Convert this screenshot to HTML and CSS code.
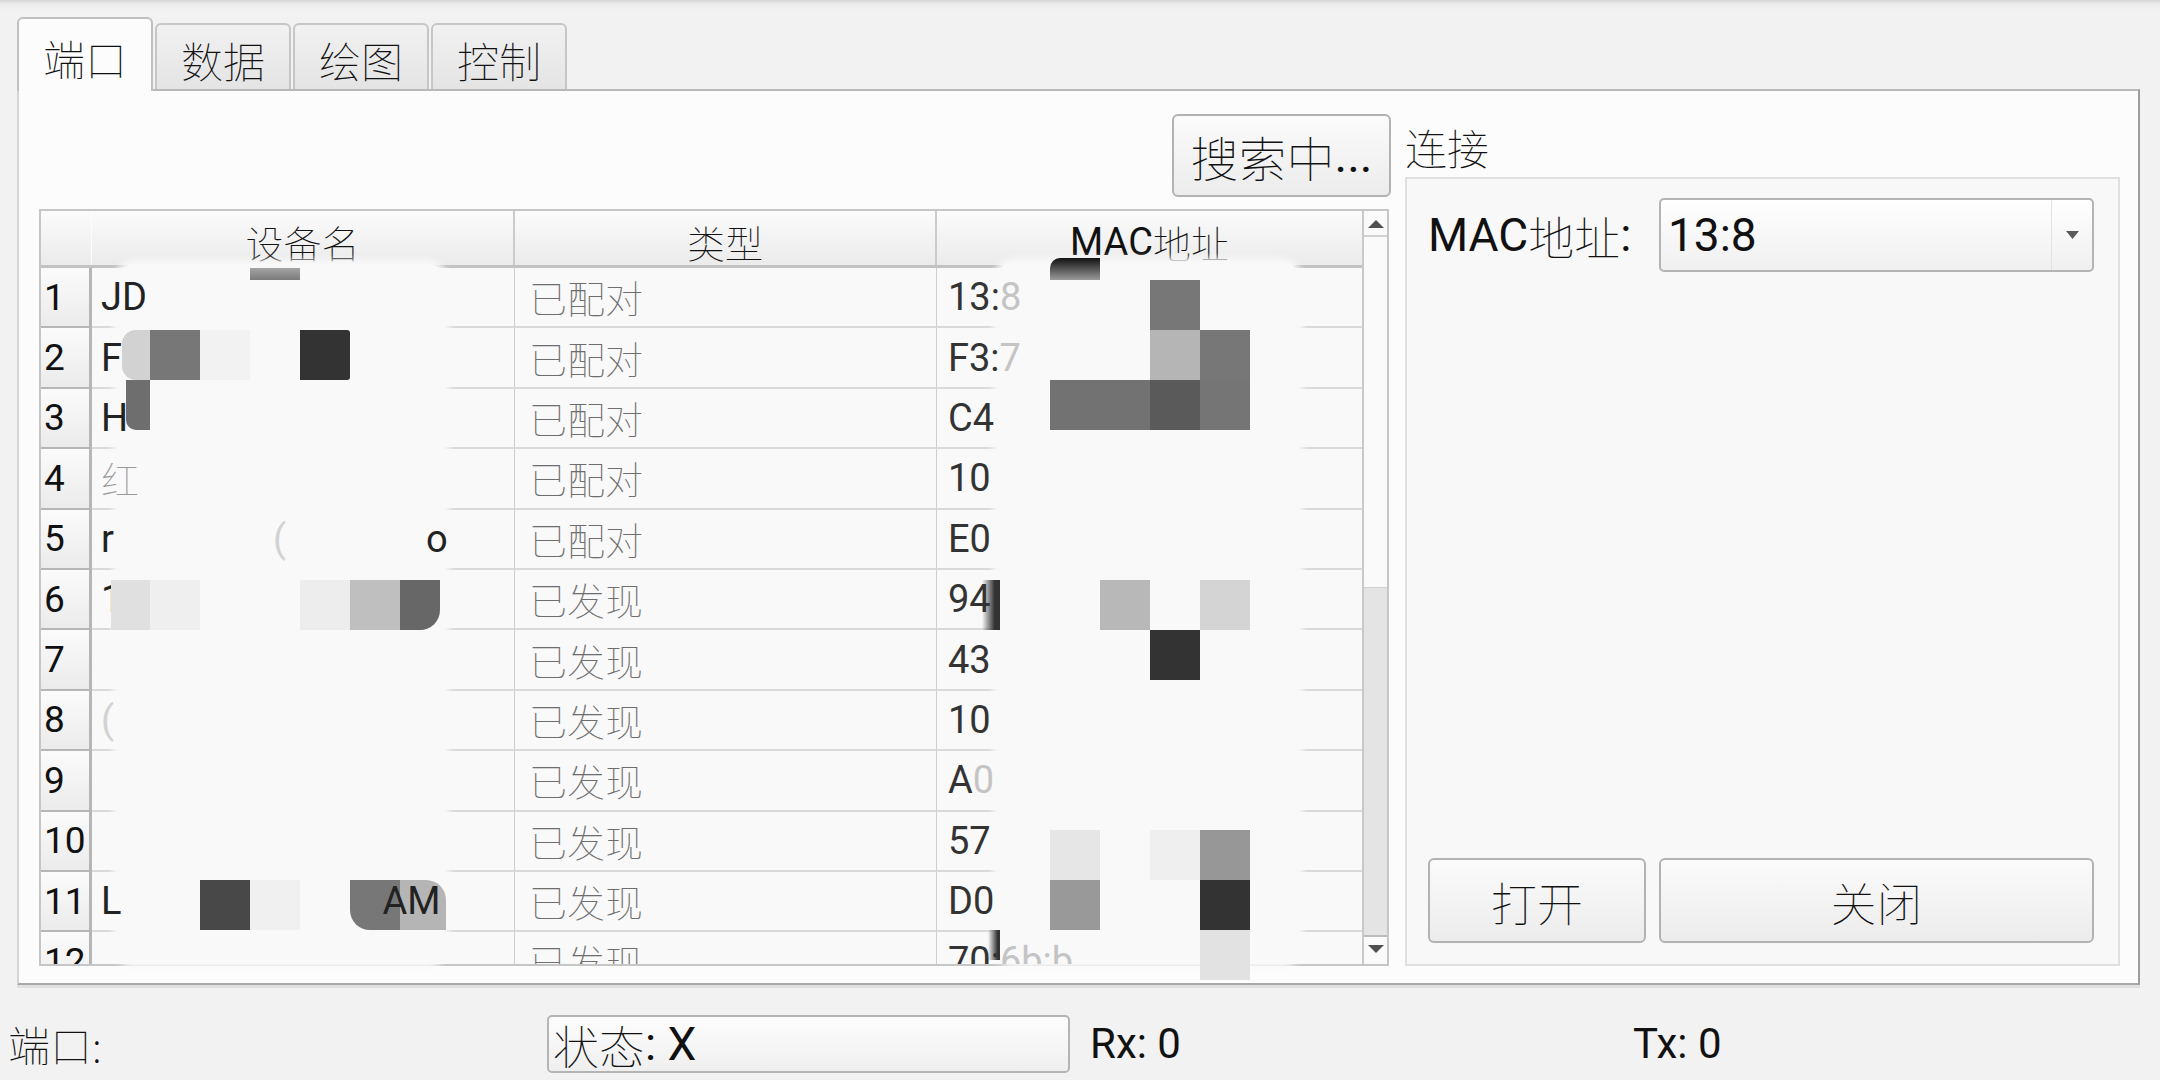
FILE: index.html
```html
<!DOCTYPE html>
<html lang="zh">
<head>
<meta charset="utf-8">
<title>端口</title>
<link rel="stylesheet" href="styles.css">
</head>
<body>
<div class="app">
  <div class="tabbar">
    <div class="tab active"><span class="cj">端口</span></div>
    <div class="tab"><span class="cj">数据</span></div>
    <div class="tab"><span class="cj">绘图</span></div>
    <div class="tab"><span class="cj">控制</span></div>
  </div>

  <div class="pane">
    <div class="left-col">
      <button type="button" class="btn search"><span class="cj">搜索中</span>...</button>
      <div class="table">
        <div class="tmain">
          <div class="thead">
            <div class="th corner"></div>
            <div class="th sep"><span class="cj">设备名</span></div>
            <div class="th sep"><span class="cj">类型</span></div>
            <div class="th">MAC<span class="cj">地址</span></div>
          </div>
          <div class="tbody">
            <div class="tr"><div class="rh">1</div><div class="td name"><span class="t">JD</span></div><div class="td type"><span class="t cj">已配对</span></div><div class="td mac"><span class="t">13:<span class="fade">8</span></span></div></div>
            <div class="tr"><div class="rh">2</div><div class="td name"><span class="t">F</span></div><div class="td type"><span class="t cj">已配对</span></div><div class="td mac"><span class="t">F3:<span class="fade">7</span></span></div></div>
            <div class="tr"><div class="rh">3</div><div class="td name"><span class="t">H</span></div><div class="td type"><span class="t cj">已配对</span></div><div class="td mac"><span class="t">C4</span></div></div>
            <div class="tr"><div class="rh">4</div><div class="td name"><span class="t cj grey">红</span></div><div class="td type"><span class="t cj">已配对</span></div><div class="td mac"><span class="t">10</span></div></div>
            <div class="tr"><div class="rh">5</div><div class="td name"><span class="t">r</span><span class="t faint gap-paren">(</span><span class="t gap-o">o</span></div><div class="td type"><span class="t cj">已配对</span></div><div class="td mac"><span class="t">E0</span></div></div>
            <div class="tr"><div class="rh">6</div><div class="td name"><span class="t">1</span></div><div class="td type"><span class="t cj">已发现</span></div><div class="td mac"><span class="t">94</span></div></div>
            <div class="tr"><div class="rh">7</div><div class="td name"></div><div class="td type"><span class="t cj">已发现</span></div><div class="td mac"><span class="t">43</span></div></div>
            <div class="tr"><div class="rh">8</div><div class="td name"><span class="t faint">(</span></div><div class="td type"><span class="t cj">已发现</span></div><div class="td mac"><span class="t">10</span></div></div>
            <div class="tr"><div class="rh">9</div><div class="td name"></div><div class="td type"><span class="t cj">已发现</span></div><div class="td mac"><span class="t">A<span class="fade">0</span></span></div></div>
            <div class="tr"><div class="rh">10</div><div class="td name"></div><div class="td type"><span class="t cj">已发现</span></div><div class="td mac"><span class="t">57</span></div></div>
            <div class="tr"><div class="rh">11</div><div class="td name"><span class="t">L</span><span class="t top gap-am">AM</span></div><div class="td type"><span class="t cj">已发现</span></div><div class="td mac"><span class="t">D0</span></div></div>
            <div class="tr"><div class="rh">12</div><div class="td name"></div><div class="td type"><span class="t cj">已发现</span></div><div class="td mac"><span class="t">70:<span class="fade">6b:b</span></span></div></div>
          </div>
        </div>
        <div class="vscroll">
          <div class="sb-btn sb-up"><svg width="16" height="8" viewBox="0 0 16 8"><polygon points="0,8 8,0 16,8" fill="#505050"/></svg></div>
          <div class="sb-track"></div>
          <div class="sb-thumb"></div>
          <div class="sb-btn sb-down"><svg width="16" height="8" viewBox="0 0 16 8"><polygon points="0,0 16,0 8,8" fill="#505050"/></svg></div>
        </div>

        <div class="cover cover-name"></div>
        <div class="cover cover-mac"></div>
        <div class="mz b1"></div><div class="mz b2"></div><div class="mz b3"></div><div class="mz b4"></div>
        <div class="mz b5"></div><div class="mz b6"></div><div class="mz b7"></div><div class="mz b8"></div>
        <div class="mz b9"></div><div class="mz b10"></div><div class="mz b11"></div><div class="mz b12"></div>
        <div class="mz b13"></div><div class="mz b14"></div><div class="mz b15"></div>
        <div class="mz c1"></div><div class="mz c2"></div><div class="mz c3"></div><div class="mz c4"></div>
        <div class="mz c5"></div><div class="mz c6"></div><div class="mz c7"></div><div class="mz c8"></div>
        <div class="mz c9"></div><div class="mz c10"></div><div class="mz c11"></div><div class="mz c12"></div>
        <div class="mz c13"></div><div class="mz c14"></div><div class="mz c15"></div><div class="mz c16"></div>
        <div class="mz c17"></div><div class="mz c18"></div>
      </div>
    </div>

    <div class="right-col">
      <div class="group-title"><span class="cj">连接</span></div>
      <div class="group">
        <div class="grow top-row">
          <div class="lbl">MAC<span class="cj">地址</span>:</div>
          <div class="combo">
            <span class="combo-text">13:8</span>
            <span class="combo-btn"><svg width="13" height="8" viewBox="0 0 13 8"><polygon points="0,0 13,0 6.5,8" fill="#5a5a5a"/></svg></span>
          </div>
        </div>
        <div class="grow bottom-row">
          <button type="button" class="btn"><span class="cj">打开</span></button>
          <button type="button" class="btn"><span class="cj">关闭</span></button>
        </div>
      </div>
    </div>
  </div>

  <div class="statusbar">
    <div class="st-lbl"><span class="cj">端口:</span></div>
    <div class="st-box"><span class="cj">状态</span>: X</div>
    <div class="st-num rx">Rx: 0</div>
    <div class="st-num">Tx: 0</div>
  </div>
</div>
</body>
</html>
```

FILE: styles.css
```css
* { box-sizing: border-box; }
html, body { margin: 0; padding: 0; }
body {
  width: 2160px;
  height: 1080px;
  overflow: hidden;
  background: linear-gradient(#d6d6d6 0, #ebebeb 4px, #f2f2f2 10px, #f2f2f2 100%);
  font-family: Roboto, "Noto Sans CJK SC", sans-serif;
  color: #111;
  line-height: 1;
}
.cj {
  font-family: "Noto Sans CJK SC", sans-serif;
  font-weight: 100;
}
.app { display: flex; flex-direction: column; height: 1080px; }

/* tabs */
.tabbar {
  display: flex;
  align-items: flex-end;
  gap: 2px;
  height: 89px;
  padding-left: 17px;
}
.tab {
  width: 136px;
  height: 66px;
  border: 2px solid #c6c6c6;
  border-bottom: none;
  border-radius: 6px 6px 0 0;
  background: linear-gradient(#f1f1f1, #e4e4e4);
  display: flex;
  align-items: center;
  justify-content: center;
  padding-top: 6px;
  font-size: 42px;
  color: #111;
}
.tab.active {
  height: 74px;
  margin-bottom: -2px;
  position: relative;
  z-index: 2;
  background: #fcfcfc;
  border-color: #c0c0c0;
}

/* main pane */
.pane {
  margin-left: 17px;
  width: 2123px;
  height: 896px;
  border: 2px solid;
  border-color: #b8b8b8 #9c9c9c #a8a8a8 #d4d4d4;
  background: #fcfcfc;
  box-shadow: 0 3px 0 #e0e0e0;
  display: flex;
  gap: 14px;
  padding: 23px 18px 17px 20px;
}
.left-col {
  width: 1352px;
  display: flex;
  flex-direction: column;
}
.btn {
  font-family: Roboto, "Noto Sans CJK SC", sans-serif;
  font-size: 46px;
  color: #111;
  line-height: 1;
  margin: 0;
  padding: 0;
  border: 2px solid #b2b2b2;
  border-radius: 6px;
  background: linear-gradient(#fbfbfb, #ececec);
  display: flex;
  align-items: center;
  justify-content: center;
}
.btn.search {
  align-self: flex-end;
  width: 219px;
  height: 83px;
  font-size: 48px;
}

/* table */
.table {
  position: relative;
  width: 1350px;
  height: 757px;
  margin-top: 12px;
  border: 2px solid #c6c6c6;
  background: #f9f9f9;
  display: flex;
}
.tmain {
  width: 1321px;
  display: flex;
  flex-direction: column;
}
.thead {
  display: grid;
  grid-template-columns: 51px 423px 422px 425px;
  height: 57px;
  border-bottom: 3px solid #c2c2c2;
  background: linear-gradient(#fbfbfb, #ebebeb);
}
.th {
  display: flex;
  align-items: center;
  justify-content: center;
  padding-top: 8px;
  font-size: 38px;
  color: #111;
}
.th.corner { border-right: 1px solid #fdfdfd; }
.th.sep { border-right: 2px solid #cbcbcb; }
.tbody {
  flex: 1;
  overflow: hidden;
}
.tr {
  display: grid;
  grid-template-columns: 51px 423px 422px 425px;
  height: 60.4px;
}
.rh {
  background: linear-gradient(#fbfbfb, #ebebeb);
  border-right: 3px solid #b6b6b6;
  border-bottom: 2px solid #b6b6b6;
  display: flex;
  align-items: center;
  padding-left: 3px;
  font-size: 37px;
  color: #111;
}
.td {
  display: flex;
  align-items: center;
  border-bottom: 2px solid #dadada;
  font-size: 38px;
  white-space: nowrap;
}
.td.name { padding-left: 9px; color: #222; border-right: 1px solid #cecece; }
.td.type { padding-left: 14px; color: #6e6e6e; border-right: 1px solid #cecece; }
.td.mac { padding-left: 11px; color: #333; }
.t { position: relative; z-index: 2; }
.t.top { z-index: 4; }
.grey { color: #9a9a9a; }
.faint { color: #d2d2d2; }
.fade { color: #c4c4c4; }
.gap-paren { margin-left: 159px; }
.gap-o { margin-left: 140px; }
.gap-am { margin-left: 261px; }

/* scrollbar */
.vscroll {
  width: 25px;
  border-left: 2px solid #c9c9c9;
  display: flex;
  flex-direction: column;
  background: #fafafa;
}
.sb-btn {
  display: flex;
  align-items: center;
  justify-content: center;
}
.sb-up { height: 26px; border-bottom: 2px solid #d2d2d2; padding-top: 2px; }
.sb-track { height: 350px; }
.sb-thumb {
  height: 350px;
  background: #e4e4e4;
  border-top: 1px solid #d0d0d0;
  border-bottom: 2px solid #bcbcbc;
}
.sb-down { flex: 1; padding-bottom: 4px; }

/* redaction overlay */
.cover {
  position: absolute;
  z-index: 1;
  background: #f9f9f9;
  border-radius: 18px;
  box-shadow: 0 0 6px 4px #f9f9f9;
}
.cover-name { left: 76px; top: 53px; width: 328px; height: 700px; }
.cover-mac { left: 956px; top: 51px; width: 302px; height: 702px; }
.mz { position: absolute; z-index: 3; width: 50px; height: 50px; }
.b1 { left: 209px; top: 57px; height: 12px; background: linear-gradient(#a5a5a5, #7a7a7a); }
.b2 { left: 81px; top: 119px; width: 28px; background: #d2d2d2; border-radius: 14px 0 0 14px; }
.b3 { left: 109px; top: 119px; background: #777777; }
.b4 { left: 159px; top: 119px; background: #f2f2f2; }
.b5 { left: 259px; top: 119px; background: #333333; border-radius: 0 3px 3px 0; }
.b6 { left: 85px; top: 169px; width: 24px; background: #6e6e6e; border-radius: 0 0 0 10px; }
.b7 { left: 70px; top: 369px; width: 39px; background: #e0e0e0; }
.b8 { left: 109px; top: 369px; background: #efefef; }
.b9 { left: 259px; top: 369px; background: #ededed; }
.b10 { left: 309px; top: 369px; background: #bfbfbf; }
.b11 { left: 359px; top: 369px; width: 40px; background: #676767; border-radius: 0 0 20px 0; }
.b12 { left: 159px; top: 669px; background: #484848; }
.b13 { left: 209px; top: 669px; background: #f0f0f0; }
.b14 { left: 309px; top: 669px; background: #777777; border-radius: 0 0 0 20px; }
.b15 { left: 359px; top: 669px; width: 46px; background: #b5b5b5; border-radius: 0 20px 0 0; }
.c1 { left: 1009px; top: 47px; height: 22px; background: linear-gradient(#111111, #9a9a9a); border-radius: 10px 0 0 0; }
.c2 { left: 1109px; top: 69px; background: #777777; }
.c3 { left: 1109px; top: 119px; background: #b5b5b5; }
.c4 { left: 1159px; top: 119px; background: #777777; }
.c5 { left: 1009px; top: 169px; width: 100px; background: #727272; }
.c6 { left: 1109px; top: 169px; background: #5a5a5a; }
.c7 { left: 1159px; top: 169px; background: #757575; }
.c8 { left: 941px; top: 369px; width: 18px; background: linear-gradient(to right, rgba(51,51,51,0), #333333 70%); }
.c9 { left: 1059px; top: 369px; background: #b8b8b8; }
.c10 { left: 1159px; top: 369px; background: #d4d4d4; }
.c11 { left: 1109px; top: 419px; background: #333333; }
.c12 { left: 1009px; top: 619px; background: #e6e6e6; }
.c13 { left: 1109px; top: 619px; background: #efefef; }
.c14 { left: 1159px; top: 619px; background: #979797; }
.c15 { left: 1009px; top: 669px; background: #999999; }
.c16 { left: 1159px; top: 669px; background: #333333; }
.c17 { left: 1159px; top: 719px; background: #e2e2e2; }
.c18 { left: 947px; top: 719px; width: 12px; height: 30px; background: linear-gradient(to right, rgba(51,51,51,0), #333333 80%); }

/* right column */
.right-col {
  width: 715px;
  display: flex;
  flex-direction: column;
}
.group-title {
  height: 63px;
  display: flex;
  align-items: center;
  padding-top: 2px;
  font-size: 42px;
  color: #111;
}
.group {
  flex: 1;
  border: 2px solid #e0e0e0;
  background: #f8f8f8;
  padding: 19px 24px 21px 21px;
  display: flex;
  flex-direction: column;
  justify-content: space-between;
}
.grow {
  display: grid;
  grid-template-columns: 218px 435px;
  column-gap: 13px;
}
.top-row { height: 74px; }
.bottom-row { height: 85px; }
.lbl {
  display: flex;
  align-items: center;
  font-size: 46px;
  color: #111;
  white-space: nowrap;
}
.combo {
  border: 2px solid #b4b4b4;
  border-radius: 5px;
  background: linear-gradient(#ffffff, #f0f0f0);
  display: flex;
}
.combo-text {
  flex: 1;
  display: flex;
  align-items: center;
  padding-left: 7px;
  font-size: 46px;
  color: #111;
}
.combo-btn {
  width: 41px;
  border-left: 1px solid #e2e2e2;
  display: flex;
  align-items: center;
  justify-content: center;
}

/* status bar */
.statusbar {
  flex: 1;
  display: grid;
  grid-template-columns: 539px 523px 563px 1fr;
  align-items: end;
  padding: 0 0 7px 8px;
}
.st-lbl, .st-num {
  height: 58px;
  display: flex;
  align-items: center;
  font-size: 42px;
  color: #111;
}
.st-num.rx { padding-left: 20px; }
.st-box {
  height: 58px;
  border: 2px solid #b4b4b4;
  border-radius: 5px;
  background: linear-gradient(#fdfdfd, #efefef);
  display: flex;
  align-items: center;
  padding-left: 4px;
  font-size: 46px;
  color: #111;
  white-space: pre;
}
```
